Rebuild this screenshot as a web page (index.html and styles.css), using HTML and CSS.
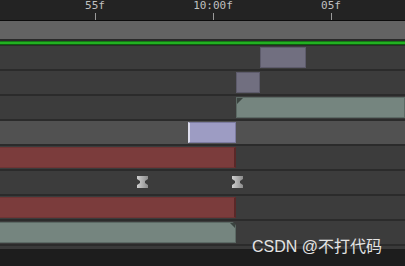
FILE: index.html
```html
<!DOCTYPE html>
<html>
<head>
    <meta charset="UTF-8">
    <title>Timeline</title>
    <link rel="stylesheet" href="styles.css">
</head>
<body>
<div class="timeline">
    <div class="ruler">
        <div class="mark" style="left: 95px;"><span>55f</span></div>
        <div class="mark" style="left: 213px;"><span>10:00f</span></div>
        <div class="mark" style="left: 331px;"><span>05f</span></div>
    </div>
    <div class="work-bar"></div>
    <div class="render-bar"></div>

    <div class="tracks">
        <div class="track">
            <div class="clip clip-gray" style="margin-left: 260px; width: 46px;"></div>
        </div>
        <div class="track">
            <div class="clip clip-gray" style="margin-left: 236px; width: 24px;"></div>
        </div>
        <div class="track">
            <div class="clip clip-teal corner-left" style="margin-left: 236px; flex: 1;"></div>
        </div>
        <div class="track track-light">
            <div class="clip clip-lavender" style="margin-left: 188px; width: 48px;"></div>
        </div>
        <div class="track">
            <div class="clip clip-red" style="width: 236px;"></div>
        </div>
        <div class="track">
            <svg class="transition" style="margin-left: 137px;" width="11" height="12" viewBox="0 0 11 12">
                <defs>
                    <linearGradient id="tg" x1="0" x2="1" y1="0" y2="0">
                        <stop offset="0" stop-color="#cfcfcf"/>
                        <stop offset="1" stop-color="#8c8c8c"/>
                    </linearGradient>
                </defs>
                <path d="M0 0 H11 V3 L8 5 V7 L11 9 V12 H0 V9 L3 7 V5 L0 3 Z" fill="url(#tg)"/>
            </svg>
            <svg class="transition" style="margin-left: 84px;" width="11" height="12" viewBox="0 0 11 12">
                <path d="M0 0 H11 V3 L8 5 V7 L11 9 V12 H0 V9 L3 7 V5 L0 3 Z" fill="url(#tg)"/>
            </svg>
        </div>
        <div class="track">
            <div class="clip clip-red" style="width: 236px;"></div>
        </div>
        <div class="track">
            <div class="clip clip-teal corner-right open-left" style="width: 236px;"></div>
        </div>
    </div>
    <div class="footer"></div>

    <div class="watermark">CSDN @不打代码</div>
</div>
</body>
</html>
```

FILE: styles.css
```css
html, body {
    margin: 0;
    padding: 0;
    background-color: #1d1d1d;
}
.timeline {
    position: relative;
    width: 405px;
    height: 266px;
    overflow: hidden;
    background-color: #1d1d1d;
}
.ruler {
    position: relative;
    height: 20px;
    background-color: #232323;
    border-bottom: 1px solid #0c0c0c;
}
.mark {
    position: absolute;
    top: 13px;
    width: 1px;
    height: 7px;
    background-color: #9a9a9a;
}
.mark span {
    position: absolute;
    bottom: 8px;
    left: 0;
    transform: translateX(-50%);
    font-family: "DejaVu Sans Mono", monospace;
    font-size: 11px;
    line-height: 12px;
    color: #c0c0c0;
    white-space: nowrap;
}
.work-bar {
    height: 18px;
    background-color: #636363;
    border-bottom: 2px solid #2a2a2a;
}
.render-bar {
    height: 2px;
    background-color: #22b022;
    border-top: 1px solid #157a15;
    border-bottom: 1px solid #0f5a0f;
}
.tracks {
    border-top: 1px solid #2a2a2a;
}
.track {
    display: flex;
    align-items: flex-start;
    height: 23px;
    background-color: #3c3c3c;
    border-bottom: 2px solid #2b2b2b;
}
.track-light {
    background-color: #515151;
}
.clip {
    position: relative;
    box-sizing: border-box;
    height: 21px;
    margin-top: 1px;
}
.clip-gray {
    background-color: #716f80;
    border: 1px solid #5d5b6b;
}
.clip-teal {
    background-color: #75857f;
    border: 1px solid #5c6a65;
}
.open-left {
    border-left: none;
}
.clip-lavender {
    background-color: #9d9cc3;
    border: 1px solid #7d7ca0;
    border-left: 2px solid #dedeee;
}
.clip-red {
    background-color: #7b3c3c;
    border-right: 2px solid #5a2828;
    border-top: 1px solid #6e3434;
    border-bottom: 1px solid #6e3434;
}
.corner-left::before {
    content: "";
    position: absolute;
    left: 0;
    top: 0;
    border-top: 6px solid #3b4440;
    border-right: 6px solid transparent;
}
.corner-right {
    border-top-right-radius: 5px;
}
.corner-right::after {
    content: "";
    position: absolute;
    right: 0;
    top: 0;
    border-top: 5px solid #3b4440;
    border-left: 5px solid transparent;
}
.transition {
    display: block;
    margin-top: 5px;
}
.footer {
    height: 3px;
    background-color: #3a3a3a;
}
.watermark {
    position: absolute;
    left: 252px;
    top: 236px;
    font-family: "Liberation Sans", "Noto Sans CJK SC", sans-serif;
    font-size: 16px;
    line-height: 22px;
    color: #e4e4e4;
    white-space: nowrap;
}
```
